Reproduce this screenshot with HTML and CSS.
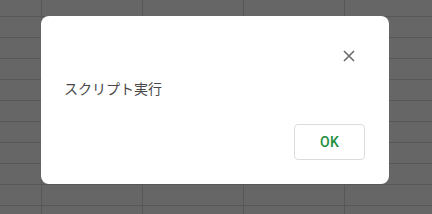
FILE: index.html
```html
<!DOCTYPE html>
<html lang="ja">
<head>
    <meta charset="UTF-8">
    <meta name="viewport" content="width=device-width, initial-scale=1.0">
    <title>スクリプト実行</title>
    <link rel="stylesheet" href="styles.css">
</head>
<body>
    <div class="sheet">
        <div class="dialog">
            <div class="dialog-header">
                <button class="close-btn" aria-label="閉じる">
                    <svg width="12" height="12" viewBox="0 0 12 12">
                        <path d="M1 1 L11 11 M11 1 L1 11" stroke="#6a6a6a" stroke-width="1.6" fill="none"/>
                    </svg>
                </button>
            </div>
            <p class="dialog-text">スクリプト実行</p>
            <div class="dialog-actions">
                <button class="ok-btn">OK</button>
            </div>
        </div>
    </div>
</body>
</html>
```

FILE: styles.css
```css
* {
    margin: 0;
    padding: 0;
    box-sizing: border-box;
}

body {
    width: 432px;
    height: 214px;
    overflow: hidden;
    font-family: 'Noto Sans CJK JP', 'Noto Sans', sans-serif;
}

/* シートの背景(グリッド線) */
.sheet {
    height: 214px;
    padding: 16px 0 0 41px;
    background-color: #666666;
    background-image:
        linear-gradient(to right, #575757 1px, transparent 1px),
        linear-gradient(to bottom, #575757 1px, transparent 1px);
    background-size: 101px 21px;
    background-position: 41px 16px, 0 16px;
}

.dialog {
    width: 348px;
    height: 168px;
    background: #ffffff;
    border-radius: 8px;
    padding: 24px 24px 24px 23px;
}

.dialog-header {
    display: flex;
    justify-content: flex-end;
    height: 32px;
}

.close-btn {
    width: 32px;
    height: 32px;
    border: none;
    background: none;
    display: flex;
    align-items: center;
    justify-content: center;
}

.dialog-text {
    margin-top: 6px;
    font-size: 14px;
    line-height: 20px;
    color: #474747;
}

.dialog-actions {
    display: flex;
    justify-content: flex-end;
    margin-top: 26px;
}

.ok-btn {
    width: 71px;
    height: 36px;
    border: 1px solid #dadce0;
    border-radius: 4px;
    background: #ffffff;
    color: #1e8e3e;
    font-family: Roboto, 'Noto Sans', sans-serif;
    font-weight: 500;
    font-size: 14px;
    letter-spacing: 0.3px;
}
```
